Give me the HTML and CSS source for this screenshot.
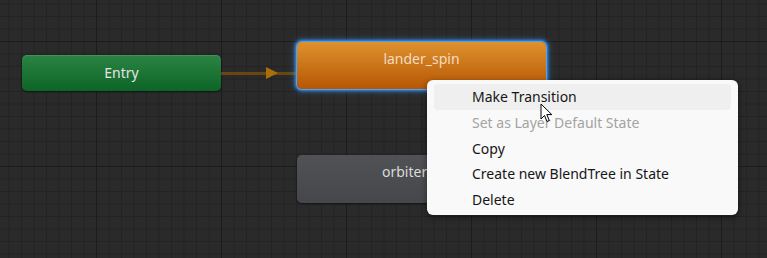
FILE: index.html
```html
<!DOCTYPE html>
<html>
<head>
<meta charset="utf-8">
<link rel="stylesheet" href="styles.css">
</head>
<body>
<div class="canvas">
  <div class="link"><span class="link-arrow"></span></div>
  <div class="node node-entry">Entry</div>
  <div class="node node-spin">lander_spin</div>
  <div class="node node-orbiter">orbiter_spin</div>
  <div class="menu">
    <div class="item hover">Make Transition</div>
    <div class="item disabled">Set as Layer Default State</div>
    <div class="item">Copy</div>
    <div class="item">Create new BlendTree in State</div>
    <div class="item">Delete</div>
  </div>
  <svg class="cursor" width="14" height="20" viewBox="0 0 14 20">
    <path d="M1 1 L1 16 L4.5 12.5 L7 18.5 L9.3 17.5 L6.8 11.6 L11.8 11.6 Z" fill="#fff" stroke="#000" stroke-width="1" stroke-linejoin="round"/>
  </svg>
</div>
</body>
</html>
```

FILE: styles.css
```css
html, body {
  margin: 0;
  padding: 0;
  width: 767px;
  height: 258px;
  overflow: hidden;
}
.canvas {
  position: relative;
  width: 767px;
  height: 258px;
  background-color: #2a2a2a;
  background-image:
    linear-gradient(to right, #1c1c1c 1px, transparent 1px),
    linear-gradient(to bottom, #1c1c1c 1px, transparent 1px),
    linear-gradient(to right, #232323 1px, transparent 1px),
    linear-gradient(to bottom, #232323 1px, transparent 1px);
  background-size: 125px 125px, 125px 125px, 12.5px 12.5px, 12.5px 12.5px;
  background-position: 96px 41px, 96px 41px, 96px 41px, 96px 41px;
  font-family: "Noto Sans", "Open Sans", sans-serif;
}
.node {
  position: absolute;
  display: flex;
  align-items: center;
  justify-content: center;
  font-size: 14px;
  border-radius: 5px;
  box-sizing: border-box;
}
.node-entry {
  left: 22px;
  top: 55px;
  width: 199px;
  height: 36px;
  padding-bottom: 2px;
  background: linear-gradient(to bottom, #2c8444, #0c6526);
  color: #e4e4e4;
  box-shadow: inset 0 1px 0 rgba(255,255,255,0.12), 0 1px 2px rgba(0,0,0,0.5);
}
.node-spin {
  left: 297px;
  top: 42px;
  width: 249px;
  height: 47px;
  padding-bottom: 14px;
  background: linear-gradient(to bottom, #de922e, #b65604);
  color: #f3dcc2;
  box-shadow: 0 0 0 1px #4aa3f8, 0 0 3px 2px rgba(60,150,245,0.9), 0 0 6px 3px rgba(60,150,245,0.35);
}
.node-orbiter {
  left: 297px;
  top: 155px;
  width: 249px;
  height: 48px;
  padding-bottom: 15px;
  background: linear-gradient(to bottom, #505256, #45474b);
  color: #dadada;
  box-shadow: 0 1px 2px rgba(0,0,0,0.5);
}
.link {
  position: absolute;
  left: 221px;
  top: 72px;
  width: 76px;
  height: 3px;
  background: #6a4610;
}
.link-arrow {
  position: absolute;
  left: 45px;
  top: -5px;
  width: 0;
  height: 0;
  border-top: 6.5px solid transparent;
  border-bottom: 6.5px solid transparent;
  border-left: 12px solid #a86e0c;
}
.menu {
  position: absolute;
  left: 427px;
  top: 80px;
  width: 311px;
  box-sizing: border-box;
  padding: 4px 7px 2px;
  background: #f9f9f9;
  border-radius: 6px;
  box-shadow: 0 2px 6px rgba(0,0,0,0.45);
  display: flex;
  flex-direction: column;
}
.item {
  height: 25.8px;
  line-height: 25px;
  padding-left: 38px;
  font-size: 14px;
  color: #161616;
  border-radius: 4px;
}
.item.hover {
  background: #efefef;
}
.item.disabled {
  color: #a3a3a3;
}
.cursor {
  position: absolute;
  left: 540px;
  top: 103px;
}
```
